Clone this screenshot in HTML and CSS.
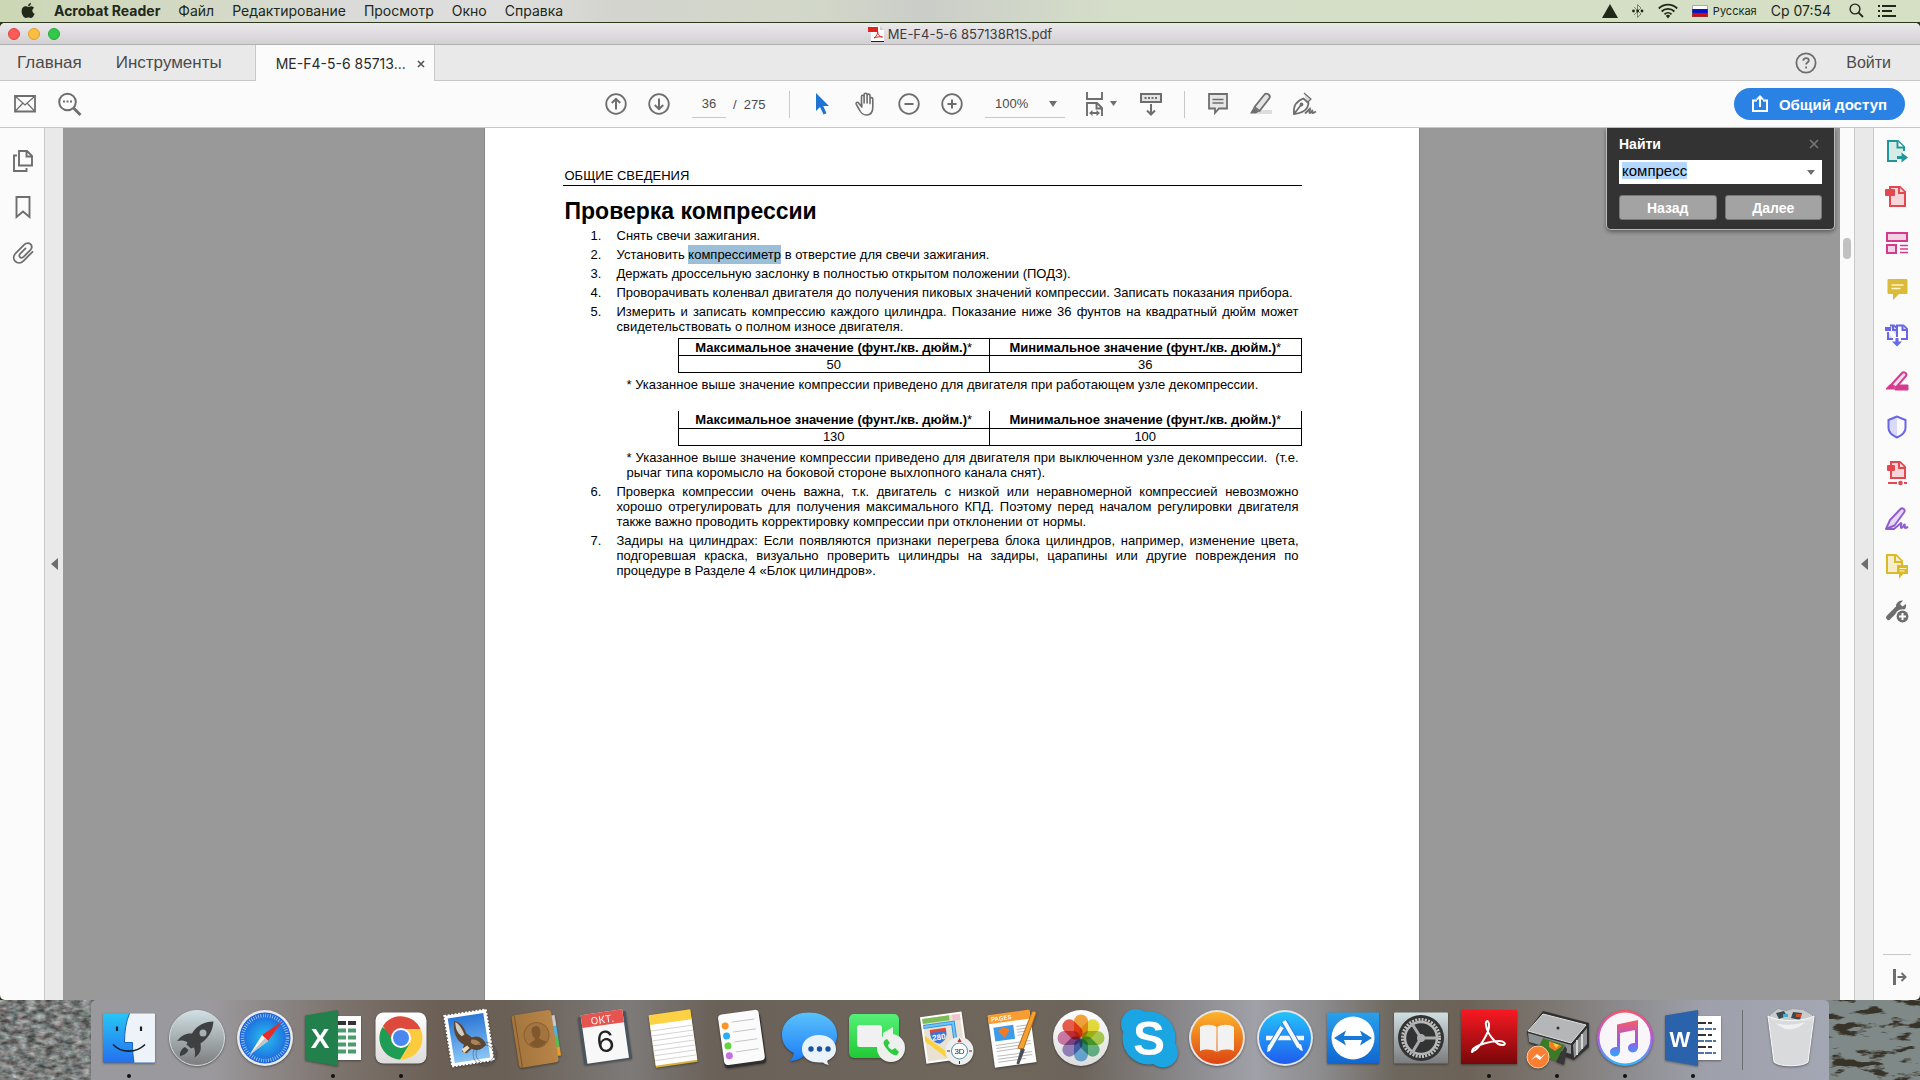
FILE: index.html
```html
<!DOCTYPE html>
<html lang="ru">
<head>
  <meta charset="UTF-8">
  <meta name="viewport" content="width=device-width, initial-scale=1.0">
  <title>ME-F4-5-6 857138R1S.pdf</title>
  <link rel="stylesheet" href="styles.css">
</head>
<body>
  <!-- Menu bar -->
  <header class="menubar">
    <nav class="menubar-left">
      <svg class="apple" width="16" height="18" viewBox="0 0 16 18" fill="#202819"><path d="M11 1c.1 1.6-1.300 3.200-2.900 3.200C7.900 2.600 9.400 1.100 11 1zM8.200 5c.6 0 1.600-.8 3-.8 1 0 2.200.5 2.900 1.600-2.600 1.500-2.100 5 .500 6-.6 1.700-2 4.200-3.500 4.200-1 0-1.400-.6-2.700-.6s-1.700.6-2.600.6C3.900 16 1.600 12.500 1.600 9.300c0-3.200 2-5 3.900-5C6.800 4.300 7.600 5 8.200 5z"/></svg>
      <a class="app-name" href="#">Acrobat Reader</a>
      <a href="#">Файл</a>
      <a href="#">Редактирование</a>
      <a href="#">Просмотр</a>
      <a href="#">Окно</a>
      <a href="#">Справка</a>
    </nav>
    <div class="menubar-right">
      <svg width="16" height="14" viewBox="0 0 16 14"><path d="M8 0l8 14H0z" fill="#202819"/></svg>
      <svg class="bluetooth" width="12" height="16" viewBox="0 0 12 16" fill="none" stroke="#7d8572"><path d="M2 4l7 7-3.500 3.500v-13L9 5l-7 7"/><g fill="#202819" stroke="none"><circle cx="1.500" cy="8" r="1.400"/><circle cx="5.700" cy="8" r="1.400"/><circle cx="10" cy="8" r="1.400"/></g></svg>
      <svg width="20" height="16" viewBox="0 0 20 16" fill="none" stroke="#202819" stroke-width="1.800"><path d="M.8 5.500a13 13 0 0 1 18.400 0M3.600 8.500a9 9 0 0 1 12.800 0M6.500 11.300a5 5 0 0 1 7 0"/><path d="M7.800 12.800L10 15.500l2.200-2.700a3.200 3.200 0 0 0-4.400 0z" fill="#202819" stroke="none"/></svg>
      <span class="lang"><svg width="16" height="12" viewBox="0 0 16 12"><path d="M0 0h16v4H0z" fill="#fff"/><path d="M0 4h16v4H0z" fill="#0a12c8"/><path d="M0 8h16v4H0z" fill="#d50b0b"/><path d="M.5.500h15v11H.5z" fill="none" stroke="#555" stroke-opacity=".5"/></svg>Русская</span>
      <span class="clock">Ср 07:54</span>
      <svg width="15" height="15" viewBox="0 0 15 15" fill="none" stroke="#202819" stroke-width="1.400"><circle cx="6" cy="6" r="4.900"/><path d="M9.600 9.600L14 14" stroke-width="1.800"/></svg>
      <svg width="18" height="12" viewBox="0 0 18 12" fill="#202819"><path d="M0 0h2v2H0zM0 5h2v2H0zM0 10h2v2H0zM4 0h14v2H4zM4 5h10v2H4zM4 10h14v2H4z"/></svg>
    </div>
  </header>

  <main class="window">
    <div class="titlebar">
      <div class="lights"><i class="close"></i><i class="minimize"></i><i class="zoom"></i></div>
      <div class="title">
        <svg width="16" height="16" viewBox="0 0 16 16"><path d="M3 0h9l4 4v11H3z" fill="#fff"/><path d="M12 0l4 4h-4z" fill="#ccc"/><path d="M0 1h10v5H0z" fill="#e3231c"/><path d="M3 15h13v1H3z" fill="#222"/><path d="M6 12c3-2 4-5 3.500-7 .5 4 2 5.500 5 6-3-.6-6 0-8.500 1z" fill="none" stroke="#e3231c"/></svg>
        <span>ME-F4-5-6 857138R1S.pdf</span>
      </div>
    </div>

    <nav class="tabs">
      <a class="tab" href="#">Главная</a>
      <a class="tab" href="#">Инструменты</a>
      <div class="tab active"><span>ME-F4-5-6 85713...</span><button class="tab-close" aria-label="Закрыть"><svg width="8" height="8" viewBox="0 0 8 8" stroke="#555" stroke-width="1.600"><path d="M1 1l6 6M7 1L1 7"/></svg></button></div>
      <div class="account">
        <button aria-label="Помощь"><svg width="22" height="22" viewBox="0 0 22 22" fill="none" stroke="#6e6e6e" stroke-width="1.800"><circle cx="11" cy="11" r="9.600"/><path d="M8.300 8.800c0-3.600 5.500-3.300 5.500-.3 0 2-2.700 2-2.700 4M11.100 14.500v2"/></svg></button>
        <a href="#">Войти</a>
      </div>
    </nav>

    <div class="toolbar">
      <div class="tools-left">
        <button aria-label="Почта"><svg width="22" height="18" viewBox="0 0 22 18" fill="none" stroke="#6e6e6e"><path d="M1 1h20v15.500H1z" stroke-width="1.800"/><path d="M1.500 1.500L11 10l9.500-8.500M1.500 16l7.500-8M20.500 16L13 8" stroke-width="1.200"/></svg></button>
        <button aria-label="Поиск"><svg width="24" height="24" viewBox="0 0 24 24" fill="none" stroke="#6e6e6e" stroke-width="2"><circle cx="9.500" cy="10" r="8.300"/><path d="M15.500 16l7 7" stroke-width="2.800"/><path d="M5 9.500h2M8.500 9.500h2M12 9.500h2"/></svg></button>
      </div>
      <div class="tools-center">
        <button aria-label="Предыдущая страница"><svg width="22" height="22" viewBox="0 0 22 22" fill="none" stroke="#6e6e6e" stroke-width="1.800"><circle cx="11" cy="11" r="9.800"/><path d="M11 16.500V6M6.800 10L11 5.800l4.200 4.200" stroke-width="2"/></svg></button>
        <button aria-label="Следующая страница"><svg width="22" height="22" viewBox="0 0 22 22" fill="none" stroke="#6e6e6e" stroke-width="1.800"><circle cx="11" cy="11" r="9.800"/><path d="M11 5.500V16M6.800 12L11 16.200l4.200-4.200" stroke-width="2"/></svg></button>
        <div class="pager"><input type="text" value="36" aria-label="Номер страницы"><span>/&nbsp; 275</span></div>
        <i class="sep"></i>
        <button aria-label="Выбор"><svg width="16" height="22" viewBox="0 0 16 22"><path d="M1 0v18l4-4 3.500 7.500 3-1.300-3.300-7.200H14z" fill="#1f73d2"/></svg></button>
        <button aria-label="Рука"><svg width="24" height="24" viewBox="0 0 24 24" fill="none" stroke="#6e6e6e" stroke-width="1.600" stroke-linecap="round" stroke-linejoin="round"><path d="M7.500 12.500V4.800c0-2 2.600-2 2.600 0V11M10.100 10.500V2.700c0-2 3-2 3 0V11M13.100 10.500V3.600c0-2 2.900-2 2.900 0v8M16 11V7c0-1.900 2.800-1.900 2.800 0v8c0 5-2.300 8-6.300 8-4.200 0-5.600-2.200-7.300-5.500l-3-5.300c-.7-1.500 1.200-2.700 2.400-1.300l3.200 4.200v-3"/></svg></button>
        <button aria-label="Уменьшить"><svg width="22" height="22" viewBox="0 0 22 22" fill="none" stroke="#6e6e6e" stroke-width="1.800"><circle cx="11" cy="11" r="9.800"/><path d="M6.500 11h9" stroke-width="2"/></svg></button>
        <button aria-label="Увеличить"><svg width="22" height="22" viewBox="0 0 22 22" fill="none" stroke="#6e6e6e" stroke-width="1.800"><circle cx="11" cy="11" r="9.800"/><path d="M6.500 11h9M11 6.500v9" stroke-width="2"/></svg></button>
        <div class="scale"><select aria-label="Масштаб"><option>100%</option><option>125%</option></select><svg width="8" height="6" viewBox="0 0 8 6"><path d="M0 0h8L4 6z" fill="#6e6e6e"/></svg></div>
        <button class="fit" aria-label="По ширине"><svg width="33" height="26" viewBox="0 0 33 26" fill="none" stroke="#6e6e6e" stroke-width="1.900"><path d="M2 1v7h15V1M2 25V12h10l5 5v8M11.500 12v5.500H17M5 22h9"/><path d="M7.500 19L4 22l3.500 3zM11.500 19l3.500 3-3.500 3z" fill="#6e6e6e" stroke="none"/><path d="M25 10h7l-3.500 5z" fill="#6e6e6e" stroke="none"/></svg></button>
        <button aria-label="Прокрутка"><svg width="22" height="24" viewBox="0 0 22 24" fill="none" stroke="#6e6e6e" stroke-width="2"><path d="M1 2h20v8H1z" fill="#e4e4e4"/><path d="M4.500 6h2M8 6h2M11.500 6h2M15 6h2M11 12v10M7 18.500l4 4 4-4"/></svg></button>
        <i class="sep"></i>
        <button aria-label="Комментарий"><svg width="20" height="22" viewBox="0 0 20 22" fill="#e6e6e6" stroke="#6e6e6e" stroke-width="1.800"><path d="M1 1h18v14.500h-8L7 20v-4.500H1z"/><path d="M4.500 6.500h11M4.500 10h11" stroke-width="1.500"/></svg></button>
        <button aria-label="Выделение"><svg width="24" height="24" viewBox="0 0 24 24"><path d="M10 18h13v4H7z" fill="#ddd"/><path d="M5.500 15L15.500 2.500c2-2 6.500 0 5 3.500L10.500 19z" fill="#e4e4e4" stroke="#6e6e6e" stroke-width="1.800"/><path d="M4.500 15.500l5.500 4-3 2H1z" fill="#6e6e6e"/></svg></button>
        <button aria-label="Подпись"><svg width="25" height="24" viewBox="0 0 25 24" fill="none" stroke="#6e6e6e" stroke-width="1.800"><path d="M12 1l7 6-4 4" fill="#d8d8d8" stroke-width="1.200"/><path d="M2 22C1 14 4 9 11.500 6.500l5 4.500C16 18 11 21 2 22zM2 22l7-9"/><circle cx="9.500" cy="12.500" r="1"/><path d="M13 21.500l5-5c.8 2-2 4.500 0 4.500s2.200-3.500 2.400-2.300c0 1.300-.6 2.300.6 2.300l3-1.500"/></svg></button>
      </div>
      <div class="tools-right">
        <button class="share"><svg width="16" height="18" viewBox="0 0 16 18" fill="none" stroke="#fff" stroke-width="2"><path d="M5 5.500H1V16h14V5.500h-4M8 12V2M5 4.500L8 1.500l3 3"/></svg>Общий доступ</button>
      </div>
    </div>

    <div class="workspace">
      <aside class="panel">
        <button aria-label="Миниатюры"><svg width="20" height="22" viewBox="0 0 20 22" fill="none" stroke="#6e6e6e" stroke-width="1.900"><path d="M6 1h8l5 5v9.500H6zM13.500 1v5.500H19M4 5.500H1V21h12.500v-3"/></svg></button>
        <button aria-label="Закладки"><svg width="16" height="22" viewBox="0 0 16 22" fill="none" stroke="#6e6e6e" stroke-width="1.900"><path d="M1.500 1h13v20L8 15.500 1.500 21z"/></svg></button>
        <button aria-label="Вложения"><svg width="22" height="22" viewBox="0 0 22 22" fill="none" stroke="#6e6e6e" stroke-width="1.800" stroke-linecap="round"><path d="M20.500 9.800l-9 9c-2.800 2.800-6.200 2.600-8.200.6s-2.300-5.400.5-8.200l8.500-8.500c2.200-2.200 4.700-2 6.200-.5s1.600 4-.5 6.200l-6.500 6.500c-1.200 1.200-2.700 1.200-3.600.3s-.8-2.400.4-3.600l5.200-5.200"/></svg></button>
      </aside>
      <button class="collapse" aria-label="Свернуть"><svg width="7" height="12" viewBox="0 0 7 12"><path d="M7 0v12L0 6z" fill="#6e6e6e"/></svg></button>

      <section class="viewer">
        <article class="page">
          <p class="page-header">ОБЩИЕ СВЕДЕНИЯ</p>
          <h1>Проверка компрессии</h1>
          <ol class="steps">
            <li><div>Снять свечи зажигания.</div></li>
            <li><div>Установить <mark>компрессиметр</mark> в отверстие для свечи зажигания.</div></li>
            <li><div>Держать дроссельную заслонку в полностью открытом положении (ПОДЗ).</div></li>
            <li><div>Проворачивать коленвал двигателя до получения пиковых значений компрессии. Записать показания прибора.</div></li>
            <li><div>
              Измерить и записать компрессию каждого цилиндра. Показание ниже 36 фунтов на квадратный дюйм может свидетельствовать о полном износе двигателя.
              <table class="values">
                <tr><th>Максимальное значение (фунт./кв. дюйм.)<span>*</span></th><th>Минимальное значение (фунт./кв. дюйм.)<span>*</span></th></tr>
                <tr><td>50</td><td>36</td></tr>
              </table>
              <p class="note">* Указанное выше значение компрессии приведено для двигателя при работающем узле декомпрессии.</p>
              <table class="values open">
                <tr><th>Максимальное значение (фунт./кв. дюйм.)<span>*</span></th><th>Минимальное значение (фунт./кв. дюйм.)<span>*</span></th></tr>
                <tr><td>130</td><td>100</td></tr>
              </table>
              <p class="note">* Указанное выше значение компрессии приведено для двигателя при выключенном узле декомпрессии.&nbsp; (т.е. рычаг типа коромысло на боковой стороне выхлопного канала снят).</p>
            </div></li>
            <li><div>Проверка компрессии очень важна, т.к. двигатель с низкой или неравномерной компрессией невозможно хорошо отрегулировать для получения максимального КПД. Поэтому перед началом регулировки двигателя также важно проводить корректировку компрессии при отклонении от нормы.</div></li>
            <li><div>Задиры на цилиндрах: Если появляются признаки перегрева блока цилиндров, например, изменение цвета, подгоревшая краска, визуально проверить цилиндры на задиры, царапины или другие повреждения по процедуре в Разделе 4 «Блок цилиндров».</div></li>
          </ol>
        </article>

        <form class="find">
          <div class="find-head"><label for="query">Найти</label><button type="button" aria-label="Закрыть"><svg width="10" height="10" viewBox="0 0 10 10" stroke="#777" stroke-width="1.600"><path d="M1 1l8 8M9 1L1 9"/></svg></button></div>
          <div class="find-field"><input type="text" id="query" value="компресс" autocomplete="off"><svg width="8" height="5" viewBox="0 0 8 5"><path d="M0 0h8L4 5z" fill="#6e6e6e"/></svg></div>
          <div class="find-buttons"><button type="button">Назад</button><button type="button">Далее</button></div>
        </form>
      </section>

      <div class="scrollbar"><i></i></div>
      <button class="collapse right" aria-label="Свернуть"><svg width="7" height="12" viewBox="0 0 7 12"><path d="M7 0v12L0 6z" fill="#6e6e6e"/></svg></button>

      <aside class="panel tools">
        <button aria-label="Экспорт PDF"><svg width="24" height="24" viewBox="0 0 24 24" fill="#d5ebe6" stroke="#21969a" stroke-width="2"><path d="M12 22H3V2h10l6 6v4"/><path d="M12.500 2v6.500H19" fill="#fff"/><path d="M12 18.500h6" stroke-width="2.800"/><path d="M16.500 13.500l6.500 5-6.500 5z" fill="#21969a" stroke="none"/></svg></button>
        <button aria-label="Создать PDF"><svg width="24" height="24" viewBox="0 0 24 24" fill="#f6d6d9" stroke="#e34850" stroke-width="2"><path d="M5 2h10l5 5v14H5z"/><path d="M14 2v6h6"/><path d="M1 5h8v5H1z" fill="#e34850" stroke-linejoin="round"/></svg></button>
        <button aria-label="Редактировать PDF"><svg width="24" height="24" viewBox="0 0 24 24" fill="#f4d3e5" stroke="#d43b90" stroke-width="2"><path d="M2 2h20v8H2zM2 14h9v8H2z"/><path d="M15 14.500h8M15 18h8M15 21.500h8" stroke-width="1.400"/></svg></button>
        <button aria-label="Комментарии"><svg width="24" height="24" viewBox="0 0 24 24"><path d="M4 2h17c1 0 1.500.5 1.500 1.500v12c0 1-.5 1.500-1.500 1.500h-7l-6 6v-6H4c-1 0-1.500-.5-1.500-1.500v-12C2.500 2.500 3 2 4 2z" fill="#dcbb3b"/><path d="M6.500 8h12M6.500 11.500h9" stroke="#fff6c8" stroke-width="1.500"/></svg></button>
        <button aria-label="Объединить файлы"><svg width="24" height="24" viewBox="0 0 24 24" fill="#dcdcf8" stroke="#6767e8" stroke-width="2"><path d="M8 16H3V9M5 2.500h4l3 3V14"/><path d="M16 16h6V6l-3.500-3.500H12V14" fill="#fff"/><path d="M17.500 2.500V7H22M8 2.500V7h4"/><path d="M0 4h6v4H0z" fill="#6767e8" stroke="none"/><path d="M10.500 15h3v3.500h3.500L12 23.500 7 18.500h3.500z" fill="#6767e8" stroke="none"/></svg></button>
        <button aria-label="Редакция"><svg width="24" height="24" viewBox="0 0 24 24"><path d="M6.500 15.500L17 4c2-2 5.500.5 4 3L11 18.500z" fill="#f7dcea" stroke="#d43b90" stroke-width="2"/><path d="M5 15.500l5.500 4.500H1zM13 16h10v5H10z" fill="#d43b90" stroke="#d43b90"/></svg></button>
        <button aria-label="Защита"><svg width="24" height="24" viewBox="0 0 24 24"><path d="M12 1.500L3 5v8c0 5 4 8 9 10z" fill="#d9d9f8"/><path d="M12 1.500L3.500 5v8c0 4.500 4 7.500 8.500 9.500 4.500-2 8.500-5 8.500-9.500V5z" fill="none" stroke="#6767e8" stroke-width="2"/></svg></button>
        <button aria-label="Сжать PDF"><svg width="24" height="24" viewBox="0 0 24 24" fill="#f6d6d9" stroke="#e34850" stroke-width="2"><path d="M6 1h9l5 5v11H6z"/><path d="M14 1v6h6M3 22h9M19 22h3"/><path d="M3 5h6v4H3z" fill="#e34850" stroke-linejoin="round"/><circle cx="15.500" cy="22" r="1.300"/></svg></button>
        <button aria-label="Заполнить и подписать"><svg width="24" height="24" viewBox="0 0 24 24" fill="#e6d9f6" stroke="#8f5bd0" stroke-width="1.900" stroke-linejoin="round"><path d="M1 22l4-9L15.500 2c2-2 5.500 1 3.500 3.500L9.500 18.500z"/><path d="M1 22h8l7-6c1.500 0-1.500 5 .500 5s1.800-3.500 3-3.500c.9 0-.5 3.500.7 3.500l3-1" fill="none"/></svg></button>
        <button aria-label="Отправить на рецензию"><svg width="24" height="24" viewBox="0 0 24 24" fill="#f6eecb" stroke="#dbb927" stroke-width="2"><path d="M2 2h9l6 6v12H2z"/><path d="M10 2v7h7"/><path d="M13 13h9v7h-4l-3 3v-3h-2z" fill="#dbb927"/><path d="M14.500 15.500h7M14.500 18h5" stroke="#fff6c8" stroke-width="1"/></svg></button>
        <button aria-label="Другие инструменты"><svg width="24" height="24" viewBox="0 0 24 24"><path d="M3.500 18.500L12 10" stroke="#6e6e6e" stroke-width="5" stroke-linecap="round"/><path d="M18 1.500l-3 3.500 2.500 2.500 3.500-2.500c1 5-3 8-7 6.500C8.500 9 11 1 18 1.500z" fill="#6e6e6e"/><circle cx="17.500" cy="17.500" r="7.300" fill="#fbfbfb"/><circle cx="17.500" cy="17.500" r="5.900" fill="#6e6e6e"/><path d="M14 17.500h7M17.500 14v7" stroke="#fff" stroke-width="2"/></svg></button>
        <button class="hide-panel" aria-label="Скрыть панель"><svg width="16" height="16" viewBox="0 0 16 16" fill="none" stroke="#6e6e6e"><path d="M3.500 0v16" stroke-width="3"/><path d="M6.500 8h8M10.500 4l4 4-4 4" stroke-width="2"/></svg></button>
      </aside>
    </div>
  </main>

  <!-- Dock -->
  <footer class="desktop">
    <svg class="wallpaper" aria-hidden="true">
      <defs>
        <filter id="gravel" x="0" y="0" width="100%" height="100%" color-interpolation-filters="sRGB"><feTurbulence type="fractalNoise" baseFrequency=".11 .2" numOctaves="3" seed="4"/><feColorMatrix values=".7 .15 0 0 .05  .7 0 .05 0 .11  .7 0 0 0 .13  0 0 0 0 1"/></filter>
        <filter id="water" x="0" y="0" width="100%" height="100%" color-interpolation-filters="sRGB"><feTurbulence type="fractalNoise" baseFrequency=".035 .1" numOctaves="4" seed="11"/><feColorMatrix values="0 0 0 0 .22  0 0 0 0 .2  0 0 0 0 .16  9 0 0 0 -5"/></filter>
      </defs>
      <rect width="50%" height="100%" filter="url(#gravel)"/>
      <rect x="50%" width="50%" height="100%" fill="#7f8988"/>
      <rect x="50%" width="50%" height="100%" filter="url(#water)"/>
    </svg>
    <nav class="dock">
      <a class="running" href="#" aria-label="Finder"><svg viewBox="0 0 56 56">
        <defs>
          <linearGradient id="finder" x2="0" y2="1"><stop stop-color="#27c5f7"/><stop offset="1" stop-color="#2471ee"/></linearGradient>
          <linearGradient id="silver" x2="0" y2="1"><stop stop-color="#d0dfe3"/><stop offset="1" stop-color="#7b7c7d"/></linearGradient>
          <linearGradient id="white" x2="0" y2="1"><stop stop-color="#fff"/><stop offset="1" stop-color="#dcdcdc"/></linearGradient>
          <radialGradient id="safari"><stop stop-color="#27c2f0"/><stop offset="1" stop-color="#1d62dc"/></radialGradient>
          <linearGradient id="sky" x2="0" y2="1"><stop stop-color="#2b76d6"/><stop offset="1" stop-color="#8ac5f5"/></linearGradient>
          <linearGradient id="bubble" x2="0" y2="1"><stop stop-color="#5ac2fb"/><stop offset="1" stop-color="#1c7df8"/></linearGradient>
          <linearGradient id="green" x2="0" y2="1"><stop stop-color="#55f078"/><stop offset="1" stop-color="#21c934"/></linearGradient>
          <linearGradient id="orange" x2="0" y2="1"><stop stop-color="#fdb42a"/><stop offset="1" stop-color="#dc4412"/></linearGradient>
          <linearGradient id="store" x2="0" y2="1"><stop stop-color="#25c3fb"/><stop offset="1" stop-color="#1f5ced"/></linearGradient>
          <linearGradient id="team" x2="0" y2="1"><stop stop-color="#2aa0ea"/><stop offset="1" stop-color="#1066d0"/></linearGradient>
          <linearGradient id="adobe" x2="0" y2="1"><stop stop-color="#f81922"/><stop offset="1" stop-color="#780709"/></linearGradient>
          <linearGradient id="itunes" x2="0" y2="1"><stop stop-color="#fb5467"/><stop offset=".5" stop-color="#b657e8"/><stop offset="1" stop-color="#2eb6fb"/></linearGradient>
          <linearGradient id="note" x2="0" y2="1"><stop stop-color="#fa5b63"/><stop offset=".6" stop-color="#9b58e8"/><stop offset="1" stop-color="#2aa9f5"/></linearGradient>
          <linearGradient id="leather" x2="1" y2="0"><stop stop-color="#a3753d"/><stop offset="1" stop-color="#b98548"/></linearGradient>
        </defs>
        <rect x="2" y="3.500" width="52" height="49" rx="1" fill="url(#finder)"/><path d="M28.500 3.500H53q1 0 1 1V51.500q0 1-1 1H33c-1-6-1.500-12-1.500-20h-8c0-11 1.500-21 5-29z" fill="#eef3fa"/><path d="M28.500 3.500c-3.500 8-5 18-5 29h8c0 8 .5 14 1.500 20" fill="none" stroke="#1a63b5"/><path d="M16 16.500v4.500M40 16.500v4.500" stroke="#17222d" stroke-width="2.200"/><path d="M12.500 35c8 8 22 8.500 31 0" fill="none" stroke="#17222d" stroke-width="1.700" stroke-linecap="round"/></svg></a>
      <a href="#" aria-label="Launchpad"><svg viewBox="0 0 56 56"><circle cx="28" cy="28" r="27.500" fill="url(#silver)" stroke="#d5dfe3"/><path d="M44.500 11.500c-9 0-17 4-21.500 12-6-.5-10 1.500-15 7.500 4-1 7-.6 10.500 1l-1 2.500 4.500 4 3-1c1 3 1.500 5.500.5 10 6-3.500 7-8 6-14 8-5.500 12-12 13-22z" fill="#3f4042"/><circle cx="34" cy="23" r="3.500" fill="#a7b1b4"/><path d="M16 37c-4 2-5.500 6-5 9 4-.5 7-3 8.500-6z" fill="#3f4042"/></svg></a>
      <a href="#" aria-label="Safari"><svg viewBox="0 0 56 56"><circle cx="28" cy="28" r="28" fill="#e9eaec"/><circle cx="28" cy="28" r="25.500" fill="url(#safari)"/><circle cx="28" cy="28" r="22.500" fill="none" stroke="#dff2ff" stroke-width="3.500" stroke-dasharray=".7 1.700" opacity=".8"/><path d="M45.500 11L31 31l-6-6z" fill="#e72d2b"/><path d="M12.500 45L25 25l6 6z" fill="#f5f5f5"/><path d="M12.500 45L31 31l-3-3z" fill="#c3c5c8"/></svg></a>
      <a class="running" href="#" aria-label="Excel"><svg viewBox="0 0 56 56"><path d="M30 6h26v44H30z" fill="#fff"/><path d="M32 11h19v4H32z" fill="#333"/><path d="M32 18.500h19v4H32zM32 25.500h19v4H32zM32 32.500h19v4H32zM32 39.500h19v4H32z" fill="#4b9b6c"/><path d="M42 10v36" stroke="#fff" stroke-width="2"/><path d="M0 5.500L33 0v56L0 50z" fill="#21804b"/><text x="15" y="38" font-size="28">X</text></svg></a>
      <a class="running" href="#" aria-label="Chrome"><svg viewBox="0 0 56 56"><rect x="2.500" y="2.500" width="51" height="51" rx="8" fill="url(#white)"/><circle cx="28" cy="28" r="21.500" fill="#fdcb3e"/><path d="M28 28L9.400 17.200A21.500 21.500 0 0 0 27 49.500L37 33z" fill="#1f9d57"/><path d="M28 28H18.500L10 16a21.500 21.500 0 0 1 37.500 3H28z" fill="#dc4a3d"/><circle cx="28" cy="28" r="10" fill="#fff"/><circle cx="28" cy="28" r="8" fill="#4a87f0"/></svg></a>
      <a href="#" aria-label="Mail"><svg viewBox="0 0 56 56"><g transform="rotate(-9 28 28)"><rect x="7" y="2.500" width="42" height="51" fill="#fff" stroke="#fff" stroke-width="2" stroke-dasharray="2 1.500"/><rect x="10" y="5.500" width="36" height="45" fill="url(#sky)"/><path d="M16 9c6 2 9 8 10 14l5 5c6-2 11 2 13 9-4 4-10 6-15 2l-6 4-4-3 3-6c-7-5-9-14-6-25z" fill="#5d452f"/><path d="M17 10c4 3 6 9 7 14l-3 1c-4-4-5-9-4-15z" fill="#d2cdc4"/><path d="M30 30c4 0 7 2 9 6-4 1-7 0-10-3z" fill="#a98459"/><path d="M19 38l6-3 2 3-6 4z" fill="#ecdcbc"/></g><circle cx="44" cy="44" r="12" fill="none" stroke="#454a54" stroke-opacity=".5"/><circle cx="44" cy="44" r="9" fill="none" stroke="#454a54" stroke-opacity=".5"/></svg></a>
      <a href="#" aria-label="Контакты"><svg viewBox="0 0 56 56"><g transform="rotate(-9 28 28)"><path d="M45 8h4v11h-4z" fill="#c9c9c9"/><path d="M45 19h4v11h-4z" fill="#4db5dd"/><path d="M45 30h4v10h-4z" fill="#55c153"/><path d="M45 40h4v9h-4z" fill="#eb9d23"/><rect x="6" y="2" width="40" height="53" rx="3" fill="url(#leather)"/><path d="M9 2v53" stroke="#80562b"/><circle cx="28" cy="25" r="12.500" fill="#a37440" stroke="#89602f"/><path d="M28 16c-6 0-5 9-2 12-1 3-5 3-6.500 5 5 5.500 12 5.500 17 0-1.500-2-5.500-2-6.500-5 3-3 4-12-2-12z" fill="#80582c"/></g></svg></a>
      <a href="#" aria-label="Календарь"><svg viewBox="0 0 56 56"><g transform="rotate(-8 28 28)"><rect x="4" y="4" width="48" height="48" fill="#48545e"/><rect x="7" y="2" width="42" height="49" fill="#f8f8f8"/><path d="M7 2h42v13H7z" fill="#e5544f"/><text class="month" x="28" y="13" font-size="10">ОКТ.</text><text class="day" x="28" y="42" font-size="29">6</text></g></svg></a>
      <a href="#" aria-label="Заметки"><svg viewBox="0 0 56 56"><g transform="rotate(-8 28 28)"><rect x="7" y="3" width="42" height="52" fill="#d8b03a"/><path d="M7 11h42v42H7z" fill="#fefefe"/><path d="M7 2h42v10H7z" fill="#fdd144"/><path d="M7 18h42M7 23h42M7 28h42M7 33h42M7 38h42M7 43h42M7 48h42" stroke="#ccc" stroke-width=".8"/></g></svg></a>
      <a href="#" aria-label="Напоминания"><svg viewBox="0 0 56 56"><g transform="rotate(-8 28 28)"><rect x="8" y="5" width="42" height="51" rx="4" fill="#2e2e2e"/><rect x="8" y="2" width="41" height="51" rx="4" fill="#fbfbfb"/><path d="M21 11h23M21 21h23M21 31h23M21 41h23" stroke="#bbb" stroke-width=".8"/><circle cx="14" cy="14" r="3.500" fill="#fb9425"/><circle cx="14" cy="24" r="3.500" fill="#28adf8"/><circle cx="14" cy="34" r="3.500" fill="#63d53c"/><circle cx="14" cy="44" r="3.500" fill="#c86fe0"/></g></svg></a>
      <a href="#" aria-label="Сообщения"><svg viewBox="0 0 56 56"><path d="M28 2.500C12 2.500 1 12 1 25c0 8 4 14 12 18-1 4-2 6-4 8 7 0 11-3 14-5 20 2 33-7 33-21C56 12 44 2.500 28 2.500z" fill="url(#bubble)"/><path d="M38 25c-10 0-17 6-17 14 0 9 8 14.500 21 13.500 2 1.500 3 2 6 2.500-1.500-2-2-3-1.500-4.500C52 48 55 44 55 39c0-8-7-14-17-14z" fill="#eaf2fa"/><g fill="#1952a0"><circle cx="30" cy="39" r="2.700"/><circle cx="38.500" cy="39" r="2.700"/><circle cx="47" cy="39" r="2.700"/></g></svg></a>
      <a href="#" aria-label="FaceTime"><svg viewBox="0 0 56 56"><rect y="4" width="50" height="44" rx="5" fill="url(#green)"/><rect x="8" y="15" width="25" height="22" rx="3" fill="#f1f1f1"/><path d="M34 23l10-6v18l-10-6z" fill="#e8f3e8"/><circle cx="42" cy="38" r="14" fill="#eef0ee"/><path d="M36 30c-2 2-2 4 1 8s7 8 11 7l2-3-4-4-3 2c-2-1-4-3-4-5l2-2-3-4z" fill="#2ccb41"/></svg></a>
      <a href="#" aria-label="Карты"><svg viewBox="0 0 56 56"><g transform="rotate(-8 28 28)"><rect x="6" y="4" width="42" height="47" fill="#fff"/><rect x="8" y="6" width="38" height="43" fill="#e9e2d3"/><path d="M8 6h27v5H8z" fill="#7dbd58"/><path d="M38 6h8v6h-8z" fill="#f3c3cb"/><path d="M8 29l20 20h7L8 23z" fill="#fbd23e"/><path d="M8 14h30v35" fill="none" stroke="#3396e4" stroke-width="4"/><path d="M8 14h30v35" fill="none" stroke="#73c2fa" stroke-width="2"/><path d="M14 19h16c1 8-2 12-8 14-6-2-9-6-8-14z" fill="#3876d8"/><path d="M14 18h16v3H14z" fill="#dd4940"/><text x="22" y="29" font-size="8">280</text></g><circle cx="42.500" cy="41" r="14" fill="#eee"/><circle cx="42.500" cy="41" r="8" fill="#fff" stroke="#4d8fae"/><path d="M42.500 28l2 4h-4z" fill="#e21e1e"/><path d="M30 41h3M52 41h3M42.500 51v3" stroke="#333"/><text class="dial" x="42.500" y="44" font-size="8">3D</text></svg></a>
      <a href="#" aria-label="Pages"><svg viewBox="0 0 56 56"><g transform="rotate(-8 28 28)"><rect x="6" y="3" width="42" height="52" fill="#fff"/><path d="M6 2h42v9H6z" fill="#f99c31"/><text class="pages" x="19" y="9" font-size="6">PAGES</text><rect x="10" y="15" width="20" height="14" fill="#3e9bea"/><path d="M14 19l6-3 6 3-6 8z" fill="#f27a24"/><path d="M33 17h12M33 20h12M33 23h12M33 26h12M10 33h35M10 36h35M10 39h28M10 44h35M10 47h35M10 50h28" stroke="#bbb"/></g><path d="M47 2c2-1.500 4-.5 4 1.500L38 40l-5-2z" fill="#f4a132" stroke="#b36a17"/><path d="M36 38l4 1.500-6 15-2.500-1z" fill="#4b4f58"/></svg></a>
      <a href="#" aria-label="Фото"><svg viewBox="0 0 56 56"><circle cx="28" cy="28" r="28" fill="url(#white)"/><g class="petals"><rect x="21" y="4.500" width="14" height="23" rx="7" fill="#f8a43c"/><rect x="21" y="4.500" width="14" height="23" rx="7" fill="#ece03d" transform="rotate(45 28 28)"/><rect x="21" y="4.500" width="14" height="23" rx="7" fill="#b2d451" transform="rotate(90 28 28)"/><rect x="21" y="4.500" width="14" height="23" rx="7" fill="#6cc18d" transform="rotate(135 28 28)"/><rect x="21" y="4.500" width="14" height="23" rx="7" fill="#74b6e6" transform="rotate(180 28 28)"/><rect x="21" y="4.500" width="14" height="23" rx="7" fill="#a08cc9" transform="rotate(225 28 28)"/><rect x="21" y="4.500" width="14" height="23" rx="7" fill="#d67fb0" transform="rotate(270 28 28)"/><rect x="21" y="4.500" width="14" height="23" rx="7" fill="#ee5f50" transform="rotate(315 28 28)"/></g></svg></a>
      <a href="#" aria-label="Skype"><svg viewBox="0 0 56 56"><circle cx="28" cy="28" r="26.500" fill="#1ba5e2"/><circle cx="15" cy="14" r="15" fill="#1ba5e2"/><circle cx="42" cy="42.500" r="15" fill="#1ba5e2"/><text x="28" y="45" font-size="48">S</text></svg></a>
      <a href="#" aria-label="iBooks"><svg viewBox="0 0 56 56"><circle cx="28" cy="28" r="28" fill="#e5e5e5"/><circle cx="28" cy="28" r="26" fill="url(#orange)"/><path d="M27.500 17c-4-3-12-3-16.500 0v24c5-2 12-2 16.500 1zM28.500 17c4-3 12-3 16.500 0v24c-5-2-12-2-16.500 1z" fill="#f2f2f2"/></svg></a>
      <a href="#" aria-label="App Store"><svg viewBox="0 0 56 56"><circle cx="28" cy="28" r="28" fill="#e5e5e5"/><circle cx="28" cy="28" r="26" fill="url(#store)"/><g stroke="#f5f8fa" fill="none"><path d="M9 28h38" stroke-width="4.500"/><path d="M25 17L12 39M27 11l15 26" stroke="#267fe4" stroke-width="6"/><path d="M25 17L13 37M27 11l15 26" stroke-width="4"/></g><path d="M11 35l4 2-2 4-3 1zM40 36l4-2 2 7-3-1z" fill="#f5f8fa"/></svg></a>
      <a href="#" aria-label="TeamViewer"><svg viewBox="0 0 56 56"><rect x="2" y="2.500" width="52" height="51" rx="1" fill="url(#team)"/><circle cx="28" cy="28" r="21.500" fill="#fff"/><path d="M9 28l12-7.500-2 5.500h18l-2-5.500L47 28l-12 7.500 2-5.500H19l2 5.500z" fill="#1779d6"/></svg></a>
      <a href="#" aria-label="Настройки"><svg viewBox="0 0 56 56"><rect y="2.500" x="1" width="54" height="51" rx="1" fill="url(#silver)"/><circle cx="28" cy="28" r="23" fill="#333"/><circle cx="28" cy="28" r="18.500" fill="none" stroke="#bfc1c1" stroke-width="3" stroke-dasharray="2 1.230"/><circle cx="28" cy="28" r="16" fill="none" stroke="#b5b7b8" stroke-width="2.500"/><circle cx="28" cy="28" r="4" fill="#a9abac"/><path d="M28 28L18.500 13M28 28h17M28 28L19 43" stroke="#a9abac" stroke-width="3"/></svg></a>
      <a class="running" href="#" aria-label="Acrobat"><svg viewBox="0 0 56 56"><rect y="0" width="56" height="54" fill="url(#adobe)"/><path d="M12 41c5-1 17-18 16-27-.5-4-4-4-3 1 1 9 11 21 17 20 4-1 1-4-4-4-9 0-22 4-26 8-2 3-1 4 0 2z" fill="none" stroke="#fff" stroke-width="2"/></svg></a>
      <a class="running" href="#" aria-label="Принтер"><svg viewBox="0 0 56 56"><path d="M-2 22L14 1l46 12v24L45 50 0 33z" fill="#303030"/><path d="M-1 21L14 4l43 11-15 18z" fill="#b4b6b7" stroke="#dedede"/><path d="M-1 23l43 12v9L0 32z" fill="#8d9092"/><path d="M44 35l14-17v16L45 48z" fill="#8f9192"/><path d="M48 30v15M53 24v15" stroke="#d5d6d6" stroke-width="2"/><path d="M14 28l22 7-9 16-20-9z" fill="#3d7a27"/><path d="M20 31l13 5-7 5-6-4z" fill="#f07d24"/><path d="M24 33l6 2-3 3z" fill="#f8d341"/><path d="M36 36l-9 16 8 3 3-16z" fill="#373737"/><circle cx="29" cy="18" r="1.500" fill="#333"/><circle cx="9" cy="47" r="11" fill="#fb7f32" stroke="#fbd0a1"/><path d="M2 50l6-6 4 3 5-4-6 7-4-3z" fill="#fff"/></svg></a>
      <a class="running" href="#" aria-label="iTunes"><svg viewBox="0 0 56 56"><circle cx="28" cy="28" r="28" fill="url(#itunes)"/><circle cx="28" cy="28" r="25.500" fill="#f8f6f9"/><path d="M20 14.500L41 10v27c0 7-10 7-10 1 0-4 4-5 7-5V20l-15 3v18c0 7-10 7-10 1 0-4 4-5 7-5z" fill="url(#note)"/></svg></a>
      <a class="running" href="#" aria-label="Word"><svg viewBox="0 0 56 56"><path d="M30 6h26v44H30z" fill="#fff"/><path d="M32 13h19M32 25h19M32 37h19" stroke="#333" stroke-width="2" stroke-dasharray="9 2 4 4"/><path d="M32 19h19M32 31h19M32 43h19" stroke="#5275a9" stroke-width="2" stroke-dasharray="7 1"/><path d="M0 5.500L33 0v56L0 50z" fill="#2a62ab"/><text x="15" y="37" font-size="22">W</text></svg></a>
      <i class="dock-sep"></i>
      <a href="#" aria-label="Корзина"><svg viewBox="0 0 56 56"><path d="M7 5l8-6 8 2 7-2 10 1 9 5v6H8z" fill="#c9cbcb"/><path d="M13 3l8-2 3 5-8 3zM30 2l9 1-2 7-9-2z" fill="#3e4a52"/><path d="M20 4h5v3h-5z" fill="#3cb1ce"/><path d="M33 4h5v3h-5z" fill="#c6502d"/><path d="M5 6c10 6 36 6 46 0l-6 46c-5 5-29 5-34 0z" fill="#dfe0e0" fill-opacity=".95" stroke="#f7f7f7"/><path d="M12 13c10 3 22 2 30-1-5 6-12 8-20 7z" fill="#f0f0f0"/></svg></a>
    </nav>
  </footer>

  <script>
    // Put the cursor in the find field with the query selected
    const query = document.getElementById("query");
    query.focus();
    query.select();
  </script>
</body>
</html>
```
FILE: styles.css
```css
* { box-sizing: border-box; }
body {
  margin: 0;
  height: 100vh;
  display: flex;
  flex-direction: column;
  overflow: hidden;
  background: #2c3a1c;
  font-family: "Liberation Sans", Arial, sans-serif;
  color: #4b4b4b;
}
a { color: inherit; text-decoration: none; }
button {
  border: none;
  background: none;
  padding: 0;
  color: inherit;
  font: inherit;
}
svg { display: block; overflow: visible; flex: none; }

/* Menu bar */
.menubar {
  height: 22px;
  margin-bottom: 1px;
  padding-bottom: 1px;
  display: flex;
  justify-content: space-between;
  align-items: center;
  background: linear-gradient(to right, #ccd7b6, #d3d9c4 10%, #dadad8 18%, #dfdfdf 26%, #d3d4ce 32%, #d2d8c9 42%, #cbcdc8 48%, #d5dec9 58%, #d6e0c4);
  color: #202819;
  font-family: Inter, sans-serif;
  font-size: 14px;
}
.menubar-left, .menubar-right { display: flex; align-items: center; }
.menubar-left { gap: 18px; padding-left: 20px; }
.menubar-right { gap: 14px; padding-right: 24px; }
.app-name { font-weight: 700; }
.lang { display: flex; align-items: center; gap: 5px; font-size: 11px; }
.clock { margin-right: 4px; }

/* Window */
.window {
  flex: 1;
  min-height: 0;
  display: flex;
  flex-direction: column;
  background: #fbfbfb;
  border-radius: 5px;
  overflow: hidden;
}
.titlebar {
  height: 22px;
  display: grid;
  grid-template-columns: 1fr auto 1fr;
  align-items: center;
  background: linear-gradient(to bottom, #ebe9eb, #d2d0d2);
  border-bottom: 1px solid #b1b1b1;
}
.lights { display: flex; gap: 8px; padding-left: 8px; }
.lights i { width: 12px; height: 12px; border-radius: 50%; }
.close { background: #fc5b57; border: 1px solid #e2443f; }
.minimize { background: #fdbe41; border: 1px solid #dfa023; }
.zoom { background: #34c84a; border: 1px solid #24ad35; }
.title {
  display: flex;
  align-items: center;
  gap: 4px;
  color: #3c3a3c;
  font-family: Inter, sans-serif;
  font-size: 13px;
}

.tabs {
  height: 36px;
  display: flex;
  align-items: center;
  background: #e9e9e9;
  border-bottom: 1px solid #c8c8c8;
  font-size: 17px;
}
.tab { padding: 0 17px; }
.tab.active {
  height: 36px;
  width: 180px;
  margin-left: 16px;
  display: flex;
  align-items: center;
  justify-content: flex-end;
  gap: 11px;
  padding: 2px 9px 0 0;
  background: #fbfbfb;
  border: 1px solid #c8c8c8;
  border-width: 0 1px;
  color: #2a2a2a;
  font-family: Inter, sans-serif;
  font-size: 14px;
}
.account {
  flex: 1;
  display: flex;
  justify-content: flex-end;
  align-items: center;
  gap: 29px;
  padding-right: 29px;
  font-size: 16px;
}

/* Toolbar */
.toolbar {
  height: 47px;
  display: grid;
  grid-template-columns: 1fr auto 1fr;
  align-items: center;
  border-bottom: 1px solid #c8c8c8;
  font-size: 13px;
}
.tools-left { display: flex; align-items: center; gap: 22px; padding-left: 14px; }
.tools-center { display: flex; align-items: center; gap: 15px; }
.tools-center button {
  width: 28px;
  height: 28px;
  display: flex;
  align-items: center;
  justify-content: center;
}
.tools-center .fit { width: 42px; }
.pager { display: flex; align-items: center; gap: 7px; width: 82px; }
.pager input {
  width: 34px;
  height: 28px;
  margin-left: 4px;
  padding: 0;
  border: none;
  border-bottom: 1px solid #c8c8c8;
  background: none;
  text-align: center;
  font: inherit;
  color: #4b4b4b;
}
.pager span { white-space: nowrap; }
.sep { width: 1px; height: 27px; margin: 0 4px; background: #c8c8c8; }
.scale {
  position: relative;
  width: 80px;
  margin-left: 4px;
}
.scale select {
  appearance: none;
  width: 100%;
  height: 28px;
  padding: 0 10px;
  border: none;
  border-bottom: 1px solid #c8c8c8;
  background: none;
  font: inherit;
  color: #4b4b4b;
}
.scale svg { position: absolute; right: 8px; top: 11px; pointer-events: none; }
.tools-right { display: flex; justify-content: flex-end; padding-right: 15px; }
.share {
  height: 32px;
  width: 171px;
  display: flex;
  align-items: center;
  justify-content: center;
  gap: 11px;
  border-radius: 16px;
  background: #2b82e5;
  color: #fff;
  font-size: 15px;
  font-weight: 700;
}

/* Side panels */
.workspace { flex: 1; min-height: 0; display: flex; }
.panel {
  width: 45px;
  display: flex;
  flex-direction: column;
  align-items: center;
  gap: 24px;
  padding: 22px 0 0 2px;
  border-right: 1px solid #c8c8c8;
}
.panel.tools {
  width: 47px;
  gap: 22px;
  padding: 11px 0 0;
  border-right: none;
  border-left: 1px solid #c8c8c8;
}
.hide-panel {
  width: 28px;
  margin-top: auto;
  padding: 14px 8px 15px;
  border-top: 1px solid #c8c8c8;
}
.collapse {
  width: 18px;
  display: flex;
  align-items: center;
  justify-content: center;
  background: #e9e9e9;
}
.scrollbar {
  width: 15px;
  padding: 110px 3px 0;
  border-right: 1px solid #c8c8c8;
}
.scrollbar i { display: block; height: 21px; border-radius: 4px; background: #c1c1c1; }

/* Document */
.viewer {
  flex: 1;
  position: relative;
  display: flex;
  justify-content: center;
  background: #999;
}
.page {
  width: 936px;
  padding: 40px 117px 0 78px;
  background: #fff;
  border: 1px solid #858585;
  border-width: 0 1px;
  color: #000;
  font-size: 13px;
  line-height: 15px;
}
.page p { margin: 0; }
.page .page-header {
  padding: 0 2px 2px;
  border-bottom: 1px solid #000;
}
.page h1 { margin: 12px 2px 4px; font-size: 23px; line-height: 26px; }
.steps {
  list-style: none;
  counter-reset: step;
  margin: 0;
  padding: 0 3px 0 28px;
}
.steps li {
  counter-increment: step;
  display: grid;
  grid-template-columns: 26px minmax(0, 1fr);
  margin-bottom: 4px;
  text-align: justify;
}
.steps li::before { content: counter(step) "."; }
mark { padding: 2px 0; background: #9bbfd9; color: inherit; }
.values {
  width: 624px;
  margin: 4px -3px 4px 61px;
  border-collapse: collapse;
  table-layout: fixed;
  text-align: center;
}
.values th, .values td { height: 17px; padding: 0; border: 1px solid #000; line-height: 15px; }
.values th span { font-weight: 400; }
.values.open { margin-top: 19px; }
.values.open th { border-top: none; }
.note { padding-left: 10px; }

/* Find box */
.find {
  position: absolute;
  top: 0;
  right: 5px;
  width: 229px;
  padding: 7px 12px 9px;
  background: #333;
  border: 1px solid #bbb;
  border-top: none;
  border-radius: 0 0 5px 5px;
  box-shadow: 0 2px 4px rgba(0, 0, 0, 0.4);
  color: #fff;
  font-size: 14px;
}
.find-head {
  height: 18px;
  display: flex;
  justify-content: space-between;
  align-items: center;
  padding-right: 3px;
  font-weight: 700;
}
.find-field {
  height: 24px;
  margin: 7px 0 11px;
  display: flex;
  align-items: center;
  padding-right: 7px;
  background: #fff;
}
.find-field input {
  flex: 1;
  min-width: 0;
  height: 24px;
  padding: 0 3px 4px;
  border: none;
  outline: none;
  background: none;
  font: inherit;
  font-size: 15px;
  color: #000;
}
.find-field input::selection { background: #b3d7ff; color: #000; }
.find-buttons { display: flex; gap: 8px; }
.find-buttons button {
  flex: 1;
  height: 25px;
  border: 1px solid #777;
  border-radius: 3px;
  background: #a3a3a3;
  font-weight: 700;
}

/* Dock */
.desktop {
  position: relative;
  height: 80px;
  display: flex;
  justify-content: center;
}
.wallpaper { position: absolute; left: 0; top: 0; width: 100%; height: 100%; }
.dock {
  position: relative;
  display: flex;
  padding: 10px 4px 0;
  border-radius: 5px 5px 0 0;
  background: linear-gradient(to right, #9a999e, #9b999d 7%, #7d746e 14%, #6c6056 20%, #6a6056 24%, #7d7a78 31%, #6a6158 36%, #6c645b 42%, #70675b 50%, #6d655c 57%, #8a898c 63%, #a0a1a8 67%, #8b8a8b 71%, #6d675e 75%, #6c6257 79%, #807b77 85%, #8f8f93 89%, #9ea1ab 93%, #a3a7b3);
}
.dock a { width: 68px; padding: 0 6px; }
.dock a svg { width: 56px; height: 56px; filter: drop-shadow(0 1px 1px rgba(0, 0, 0, 0.4)); }
.dock .running::after {
  content: "";
  display: block;
  width: 4px;
  height: 4px;
  margin: 8px auto 0;
  border-radius: 50%;
  background: #111;
}
.dock text { fill: #fff; font-weight: 700; text-anchor: middle; }
.dock .month, .dock .day { font-family: Inter, sans-serif; font-weight: 400; }
.dock .day, .dock .dial { fill: #222; }
.dock .dial { font-weight: 400; }
.petals { mix-blend-mode: multiply; }
.petals rect { mix-blend-mode: multiply; }
.dock-sep { width: 1px; height: 60px; margin: 0 14px 0 15px; background: #6b6d73; }
```
